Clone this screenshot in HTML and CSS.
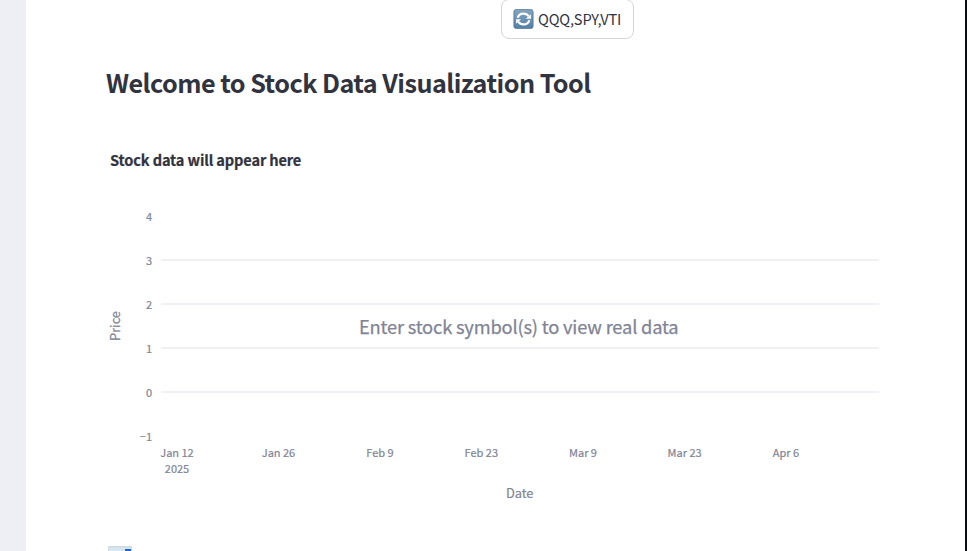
FILE: index.html
```
<!DOCTYPE html>
<html lang="en">
<head>
<meta charset="utf-8">
<title>Stock Data Visualization Tool</title>
<link rel="stylesheet" href="styles.css">
</head>
<body>
<div class="app">
  <aside class="sidebar"></aside>
  <main class="content">
    <button class="preset" type="button">
      <svg class="preset-icon" viewBox="0 0 20 20" aria-hidden="true">
        <defs><linearGradient id="tile" x1="0" y1="0" x2="0" y2="1"><stop offset="0" stop-color="#84a5be"/><stop offset="1" stop-color="#527fa8"/></linearGradient></defs>
        <rect x=".4" y=".4" width="19.2" height="19.2" rx="2.4" fill="url(#tile)" stroke="#537694" stroke-width=".8"/>
        <path d="M4.2 8.8C5 6 7.2 4.6 10 4.6c2.2 0 4 .9 5 2.7M15.8 11.2c-.8 2.8-3 4.2-5.8 4.2-2.2 0-4-.9-5-2.7" fill="none" stroke="#fff" stroke-width="2.2"/>
        <path d="M17.4 5.2v4.6h-5zM2.6 14.8v-4.6h5z" fill="#fff"/>
      </svg>
      <span class="preset-label">QQQ,SPY,VTI</span>
    </button>
    <h2 class="heading">Welcome to Stock Data Visualization Tool</h2>
    <svg class="chart" width="800" height="400" viewBox="106 123 800 400" role="img" aria-label="Stock data will appear here">
      <text class="chart-title" x="110" y="166">Stock data will appear here</text>
      <g class="grid">
        <path d="M161 260H879M161 304H879M161 348H879M161 392H879"/>
      </g>
      <g class="tick y-tick">
        <text x="152" y="221">4</text>
        <text x="152" y="265">3</text>
        <text x="152" y="309">2</text>
        <text x="152" y="353">1</text>
        <text x="152" y="397">0</text>
        <text x="152" y="441">−1</text>
      </g>
      <g class="tick x-tick">
        <text x="177" y="457">Jan 12</text>
        <text x="177" y="473">2025</text>
        <text x="278.5" y="457">Jan 26</text>
        <text x="380" y="457">Feb 9</text>
        <text x="481.3" y="457">Feb 23</text>
        <text x="583" y="457">Mar 9</text>
        <text x="684.6" y="457">Mar 23</text>
        <text x="786" y="457">Apr 6</text>
      </g>
      <text class="axis-title" x="519.7" y="498">Date</text>
      <text class="axis-title" transform="translate(120 326) rotate(-90)">Price</text>
      <text class="annotation" x="518.7" y="334">Enter stock symbol(s) to view real data</text>
    </svg>
    <svg class="emoji" width="24" height="24" viewBox="0 0 24 24" aria-hidden="true">
      <rect width="24" height="24" rx="1" fill="#cfdbe3"/>
      <rect x="1" y="1.5" width="22" height="21.5" fill="#d7e6f1"/>
      <path d="M17 4h5v6M21 5l-7 8-4-4-7 8" fill="none" stroke="#1767c6" stroke-width="2"/>
    </svg>
  </main>
</div>
</body>
</html>
```
FILE: styles.css
```
body {
  margin: 0;
  overflow: hidden;
  background: #fff;
  color: #31333f;
  font-family: "Noto Sans CJK SC", "Noto Sans", sans-serif;
}

.app {
  display: flex;
  box-sizing: border-box;
  height: 551px;
  overflow: hidden;
  border-right: 2px solid #050c1b;
}

.sidebar {
  flex: none;
  width: 26px;
  background: #eeeff4;
}

.content {
  display: flex;
  flex: 1;
  flex-direction: column;
  align-items: flex-start;
  min-width: 0;
  padding-left: 80px;
}

.preset {
  display: flex;
  flex: none;
  align-items: center;
  gap: 4px;
  box-sizing: border-box;
  width: 133px;
  height: 40px;
  margin: -1px 0 0 395px;
  padding: 0 0 0 11px;
  border: 1px solid #d5d6d9;
  border-radius: 8px;
  background: #fff;
  color: #31333f;
  font: 400 14.6px/20px "Noto Sans CJK SC", "Noto Sans", sans-serif;
  letter-spacing: -0.17px;
}

.preset-icon {
  flex: none;
  width: 21px;
  height: 20px;
}

.heading {
  flex: none;
  height: 40px;
  margin: 24px 0 20px;
  font-size: 25.2px;
  font-weight: 700;
  letter-spacing: -0.54px;
  line-height: 39px;
  white-space: nowrap;
}

.chart {
  flex: none;
  display: block;
}

.chart-title {
  fill: #31333f;
  stroke: #31333f;
  stroke-width: 0.2px;
  font-size: 14.6px;
  font-weight: 700;
  letter-spacing: -0.14px;
}

.grid path {
  fill: none;
  stroke: #f0f1f6;
  stroke-width: 2;
}

.tick {
  fill: #808495;
  stroke: #808495;
  stroke-width: 0.2px;
  font-size: 11px;
}

.y-tick {
  text-anchor: end;
}

.x-tick,
.axis-title,
.annotation {
  text-anchor: middle;
}

.axis-title {
  fill: #808495;
  stroke: #808495;
  stroke-width: 0.2px;
  font-size: 12.8px;
}

.annotation {
  fill: #808495;
  stroke: #808495;
  stroke-width: 0.25px;
  font-size: 18.3px;
  letter-spacing: -0.18px;
}

.emoji {
  flex: none;
  margin: 23px 0 0 2px;
}
```
